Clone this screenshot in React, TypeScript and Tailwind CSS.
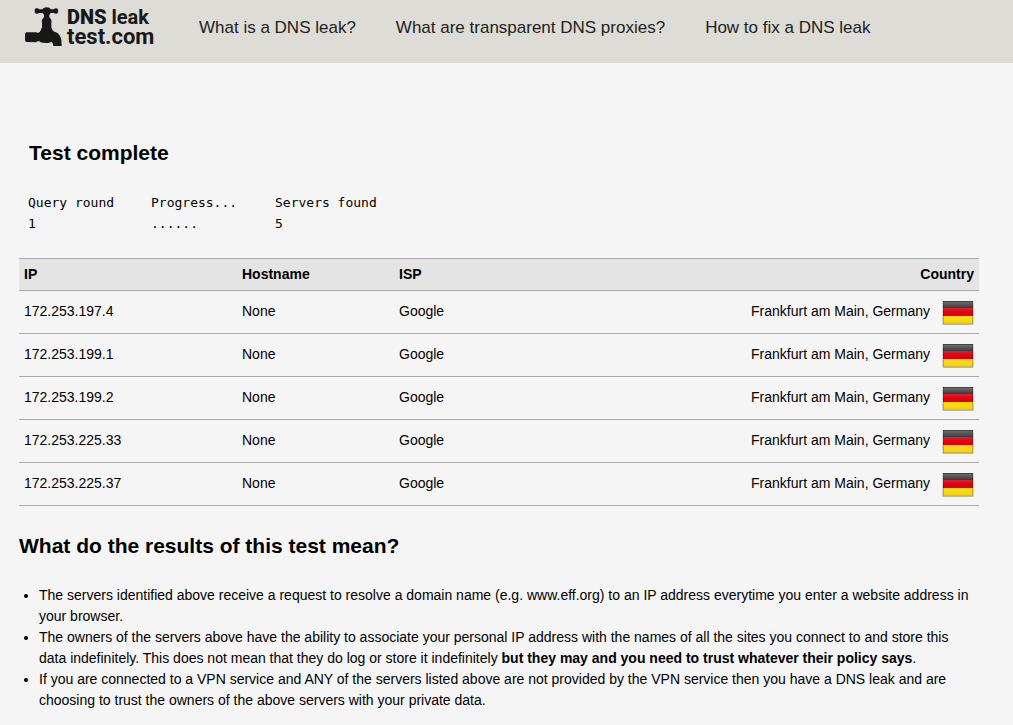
const servers = [
  "172.253.197.4",
  "172.253.199.1",
  "172.253.199.2",
  "172.253.225.33",
  "172.253.225.37",
];

const links = [
  "What is a DNS leak?",
  "What are transparent DNS proxies?",
  "How to fix a DNS leak",
];

function Faucet() {
  return (
    <svg viewBox="0 0 111 117" className="h-[39px] w-[37px]" fill="#181818" aria-hidden="true">
      <path d="M29 8 Q30 4 35 4 Q40 4 43 7 L52 7 Q56 1 65 1 Q74 1 78 7 L86 7 Q89 4 94 4 Q100 5 100 12 Q100 20 94 20 Q88 20 86 18 L77 18 L73 24 L73 31 Q80 36 80 44 L79 46 L79 62 L82 66 L82 69 Q86 74 93 76 Q105 81 109 98 L110 117 L85 117 Q85 108 79 104 L73 107 Q61 110 47 106 L43 103 L37 103 L34 106 L3 105 L0 100 L0 80 L3 76 L35 76 L38 78 Q46 76 48 68 L48 66 L51 62 L51 46 L50 44 Q50 36 57 31 L57 24 L53 18 L43 18 Q40 20 35 20 Q29 20 29 14 Z" />
    </svg>
  );
}

function GermanFlag() {
  return (
    <svg viewBox="0 0 32 24" className="h-[24px] w-[32px] shrink-0" role="img" aria-label="Germany">
      <defs>
        <linearGradient id="flag-black" x1="0" y1="0" x2="0" y2="1">
          <stop offset="0" stopColor="#747474" />
          <stop offset="1" stopColor="#3a3a3a" />
        </linearGradient>
        <linearGradient id="flag-red" x1="0" y1="0" x2="0" y2="1">
          <stop offset="0" stopColor="#e2202a" />
          <stop offset="0.5" stopColor="#e5000f" />
          <stop offset="1" stopColor="#d30012" />
        </linearGradient>
        <linearGradient id="flag-gold" x1="0" y1="0" x2="0" y2="1">
          <stop offset="0" stopColor="#ffdf10" />
          <stop offset="1" stopColor="#f5d015" />
        </linearGradient>
      </defs>
      <rect y="0" width="32" height="24" rx="1" fill="#000" opacity="0.14" />
      <rect x="1" y="1" width="30" height="22.5" fill="#000" opacity="0.25" />
      <rect x="1" y="0" width="30" height="7" fill="url(#flag-black)" />
      <rect x="1" y="7" width="30" height="8" fill="url(#flag-red)" />
      <rect x="1" y="15" width="30" height="7.5" fill="url(#flag-gold)" />
      <path d="M1 .5h30" stroke="#444" />
      <path d="M1.5 0v22.5M30.5 0v22.5" stroke="#000" opacity="0.2" />
    </svg>
  );
}

export default function App() {
  return (
    <div className="min-h-screen bg-[#f5f5f5] font-['Liberation_Sans',Arial,sans-serif] text-[14px] leading-[21px] text-black">
      <header className="flex h-[63px] items-start bg-[#dddcd7] text-[#222]">
        <a href="#" className="flex w-[199px] shrink-0 gap-[5px] pt-[7px] pl-[25px] text-[#181818]">
          <Faucet />
          <span className="flex flex-col font-['Roboto',sans-serif] text-[20px] leading-[20px] font-bold whitespace-nowrap">
            <span>
              <span className="font-black">DNS</span> leak
            </span>
            <span className="text-[22px]">test.com</span>
          </span>
        </a>
        <nav className="flex gap-[40px] pt-[16px] text-[17px] leading-[24px] whitespace-nowrap">
          {links.map((link) => (
            <a key={link} href="#">
              {link}
            </a>
          ))}
        </nav>
      </header>

      <main className="pt-[74px] pr-[34px] pb-[14px] pl-[19px]">
        <h1 className="pl-[10px] text-[21px] leading-[32px] font-bold">Test complete</h1>

        <table className="mt-[23px] ml-[9px] text-left font-['DejaVu_Sans_Mono',monospace] text-[13px] leading-[21px]">
          <thead>
            <tr>
              <th className="w-[123px] p-0 font-normal">Query round</th>
              <th className="w-[124px] p-0 font-normal">Progress...</th>
              <th className="p-0 font-normal">Servers found</th>
            </tr>
          </thead>
          <tbody>
            <tr>
              <td className="p-0">1</td>
              <td className="p-0">......</td>
              <td className="p-0">5</td>
            </tr>
          </tbody>
        </table>

        <table className="mt-[24px] w-full border-collapse text-left">
          <thead>
            <tr className="h-[32px] border-y border-[#aaa] bg-[#e4e4e4]">
              <th className="w-[218px] px-[5px] py-0">IP</th>
              <th className="w-[157px] px-[5px] py-0">Hostname</th>
              <th className="px-[5px] py-0">ISP</th>
              <th className="px-[5px] py-0 text-right">Country</th>
            </tr>
          </thead>
          <tbody>
            {servers.map((ip) => (
              <tr key={ip} className="h-[43px] border-b border-[#aaa] align-top">
                <td className="px-[5px] pt-[10px] pb-0">{ip}</td>
                <td className="px-[5px] pt-[10px] pb-0">None</td>
                <td className="px-[5px] pt-[10px] pb-0">Google</td>
                <td className="px-[5px] pt-[10px] pb-0">
                  <div className="flex items-start justify-end gap-[12px]">
                    <span>Frankfurt am Main, Germany</span>
                    <GermanFlag />
                  </div>
                </td>
              </tr>
            ))}
          </tbody>
        </table>

        <h2 className="mt-[24px] text-[21px] leading-[32px] font-bold">
          What do the results of this test mean?
        </h2>
        <ul className="mt-[23px] list-disc pl-[20px]">
          <li>
            The servers identified above receive a request to resolve a domain name (e.g.
            www.eff.org) to an IP address everytime you enter a website address in your browser.
          </li>
          <li>
            The owners of the servers above have the ability to associate your personal IP address
            with the names of all the sites you connect to and store this data indefinitely. This
            does not mean that they do log or store it indefinitely{" "}
            <b>but they may and you need to trust whatever their policy says</b>.
          </li>
          <li>
            If you are connected to a VPN service and ANY of the servers listed above are not
            provided by the VPN service then you have a DNS leak and are choosing to trust the
            owners of the above servers with your private data.
          </li>
        </ul>
      </main>
    </div>
  );
}
